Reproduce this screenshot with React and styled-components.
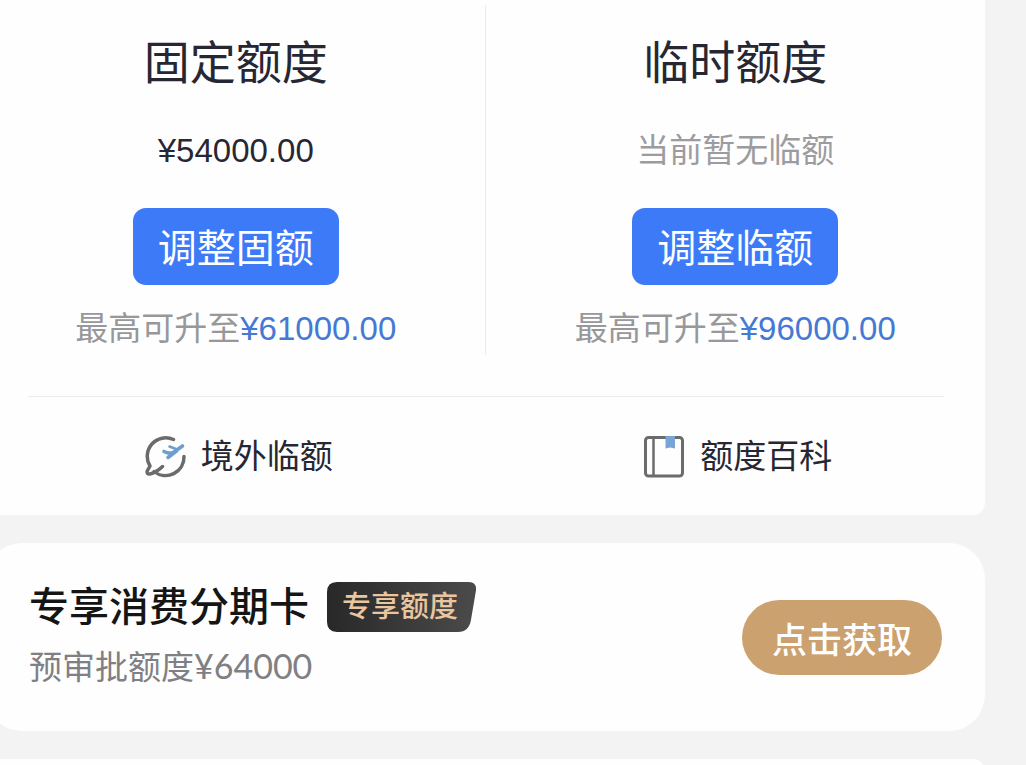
import React from "react";
import styled, { createGlobalStyle } from "styled-components";

const limits = [
  {
    title: "固定额度",
    amount: "¥54000.00",
    action: "调整固额",
    max: "¥61000.00",
  },
  {
    title: "临时额度",
    empty: "当前暂无临额",
    action: "调整临额",
    max: "¥96000.00",
  },
];

const PlaneIcon = () => (
  <Icon viewBox="0 0 42 42" aria-hidden="true">
    <g
      fill="none"
      stroke="#6b6b6b"
      strokeWidth="3.5"
      strokeLinecap="round"
      strokeLinejoin="round"
    >
      <path d="M28.5 3.5A18.5 18.5 0 0 0 5 30L2.2 35Q1.5 38.5 5 38Q12 36 17.5 30.5" />
      <path d="M9 35.5A18.5 18.5 0 0 0 39 20.5" />
    </g>
    <g
      fill="none"
      stroke="#6d9fcd"
      strokeWidth="3.6"
      strokeLinecap="round"
      strokeLinejoin="round"
    >
      <path d="M37.5 10L29 16Q25 18.5 19 15.5" />
      <path d="M31.5 15L23 21.5" />
      <path d="M24.5 10.5L31 13" strokeWidth="2.6" />
    </g>
  </Icon>
);

const BookIcon = () => (
  <Icon viewBox="0 0 42 42" aria-hidden="true">
    <g fill="none" stroke="#6b6b6b" strokeWidth="3">
      <rect x="1.5" y="1.5" width="37" height="38.5" rx="3" />
      <path d="M9.5 1.5V40" strokeWidth="2.5" />
    </g>
    <path d="M21.5 0H31V12.5L26.2 11.5L21.5 12.5Z" fill="#76a5d6" />
  </Icon>
);

const App = () => {
  return (
    <Page>
      <GlobalStyle />
      <Feed>
        <LimitCard>
          <Limits>
            {limits.map((item) => (
              <Limit key={item.title}>
                <Title>{item.title}</Title>
                <Amount $muted={!item.amount}>
                  {item.amount || item.empty}
                </Amount>
                <AdjustButton type="button">{item.action}</AdjustButton>
                <Hint>
                  最高可升至<span>{item.max}</span>
                </Hint>
              </Limit>
            ))}
          </Limits>
          <Divider />
          <Links>
            <Shortcut href="#overseas">
              <PlaneIcon />
              境外临额
            </Shortcut>
            <Shortcut href="#wiki">
              <BookIcon />
              额度百科
            </Shortcut>
          </Links>
        </LimitCard>

        <OfferCard>
          <div>
            <OfferHead>
              <OfferTitle>专享消费分期卡</OfferTitle>
              <Badge>
                <BadgeShape
                  viewBox="0 0 149 49"
                  preserveAspectRatio="none"
                  aria-hidden="true"
                >
                  <defs>
                    <linearGradient id="badge" x1="0" y1="0" x2="1" y2="0">
                      <stop offset="0" stopColor="#282828" />
                      <stop offset="1" stopColor="#4b4b4b" />
                    </linearGradient>
                  </defs>
                  <path
                    d="M10 0H141Q150 0 149 8L144 37Q142 49 131 49H10Q0 49 0 39V10Q0 0 10 0Z"
                    fill="url(#badge)"
                  />
                </BadgeShape>
                <span>专享额度</span>
              </Badge>
            </OfferHead>
            <OfferText>
              预审批额度<span>¥64000</span>
            </OfferText>
          </div>
          <GetButton type="button">点击获取</GetButton>
        </OfferCard>

        <NextCard />
      </Feed>
    </Page>
  );
};

export default App;

const GlobalStyle = createGlobalStyle`
  * {
    box-sizing: border-box;
  }

  body {
    margin: 0;
    background-color: #f3f3f3;
    font-family: "Liberation Sans", "Noto Sans CJK SC", sans-serif;
    color: #272733;
  }

  button {
    border: none;
    font-family: inherit;
    cursor: pointer;
  }
`;

const Page = styled.main`
  height: 100vh;
  overflow: hidden;
`;

const Feed = styled.div`
  display: flex;
  flex-direction: column;
  gap: 28px;
  margin: 0 41px 0 -14px;
`;

const LimitCard = styled.section`
  padding-top: 5px;
  background-color: #fefefe;
  border-radius: 0 0 12px 12px;
`;

const Limits = styled.div`
  display: grid;
  grid-template-columns: 1fr 1fr;
`;

const Limit = styled.div`
  display: flex;
  flex-direction: column;
  align-items: center;
  padding: 28px 0 6px;

  & + & {
    box-shadow: -1px 0 #ececec;
  }
`;

const Title = styled.h2`
  margin: 0 0 38px;
  font-size: 46px;
  line-height: 60px;
  font-weight: 400;
`;

const Amount = styled.div`
  margin-bottom: 37px;
  font-size: 33px;
  line-height: 40px;
  color: ${({ $muted }) => ($muted ? "#9c9ca0" : "#272733")};
`;

const AdjustButton = styled.button`
  height: 77px;
  margin-bottom: 24px;
  padding: 4px 25px 0;
  border-radius: 13px;
  background-color: #3d7af7;
  color: #fff;
  font-size: 39px;
  line-height: 50px;
`;

const Hint = styled.div`
  font-size: 33px;
  line-height: 40px;
  color: #98989a;

  span {
    color: #4479d4;
  }
`;

const Divider = styled.hr`
  height: 1px;
  margin: 41px 41px 0 42px;
  border: none;
  background-color: #ececec;
`;

const Links = styled.nav`
  display: grid;
  grid-template-columns: 1fr 1fr;
`;

const Shortcut = styled.a`
  display: flex;
  align-items: center;
  justify-content: center;
  gap: 14px;
  height: 118px;
  padding: 2px 0 0 6px;
  color: #272733;
  font-size: 33px;
  line-height: 40px;
  text-decoration: none;
`;

const Icon = styled.svg`
  width: 42px;
  height: 42px;
`;

const OfferCard = styled.section`
  display: flex;
  align-items: center;
  justify-content: space-between;
  min-height: 188px;
  padding: 0 43px;
  background-color: #fefefe;
  border-radius: 36px;
`;

const OfferHead = styled.div`
  display: flex;
  align-items: center;
  gap: 18px;
  margin-bottom: 14px;
`;

const OfferTitle = styled.h2`
  margin: 0;
  font-size: 40px;
  line-height: 50px;
  font-weight: 500;
  color: #151515;
`;

const Badge = styled.div`
  position: relative;
  padding: 0 18px 0 15px;
  font-size: 29px;
  line-height: 50px;
  font-weight: 500;
  color: #eac6a0;

  span {
    position: relative;
  }
`;

const BadgeShape = styled.svg`
  position: absolute;
  inset: 0;
  width: 100%;
  height: 100%;
`;

const OfferText = styled.div`
  padding-bottom: 4px;
  font-size: 33px;
  line-height: 40px;
  color: #808084;

  span {
    font-family: Lato, sans-serif;
    font-size: 34px;
  }
`;

const GetButton = styled.button`
  height: 75px;
  padding: 0 30px;
  border-radius: 38px;
  background-color: #cba16f;
  color: #fff;
  font-size: 35px;
  font-weight: 500;
`;

const NextCard = styled.section`
  min-height: 120px;
  background-color: #fefefe;
  border-radius: 12px;
`;
